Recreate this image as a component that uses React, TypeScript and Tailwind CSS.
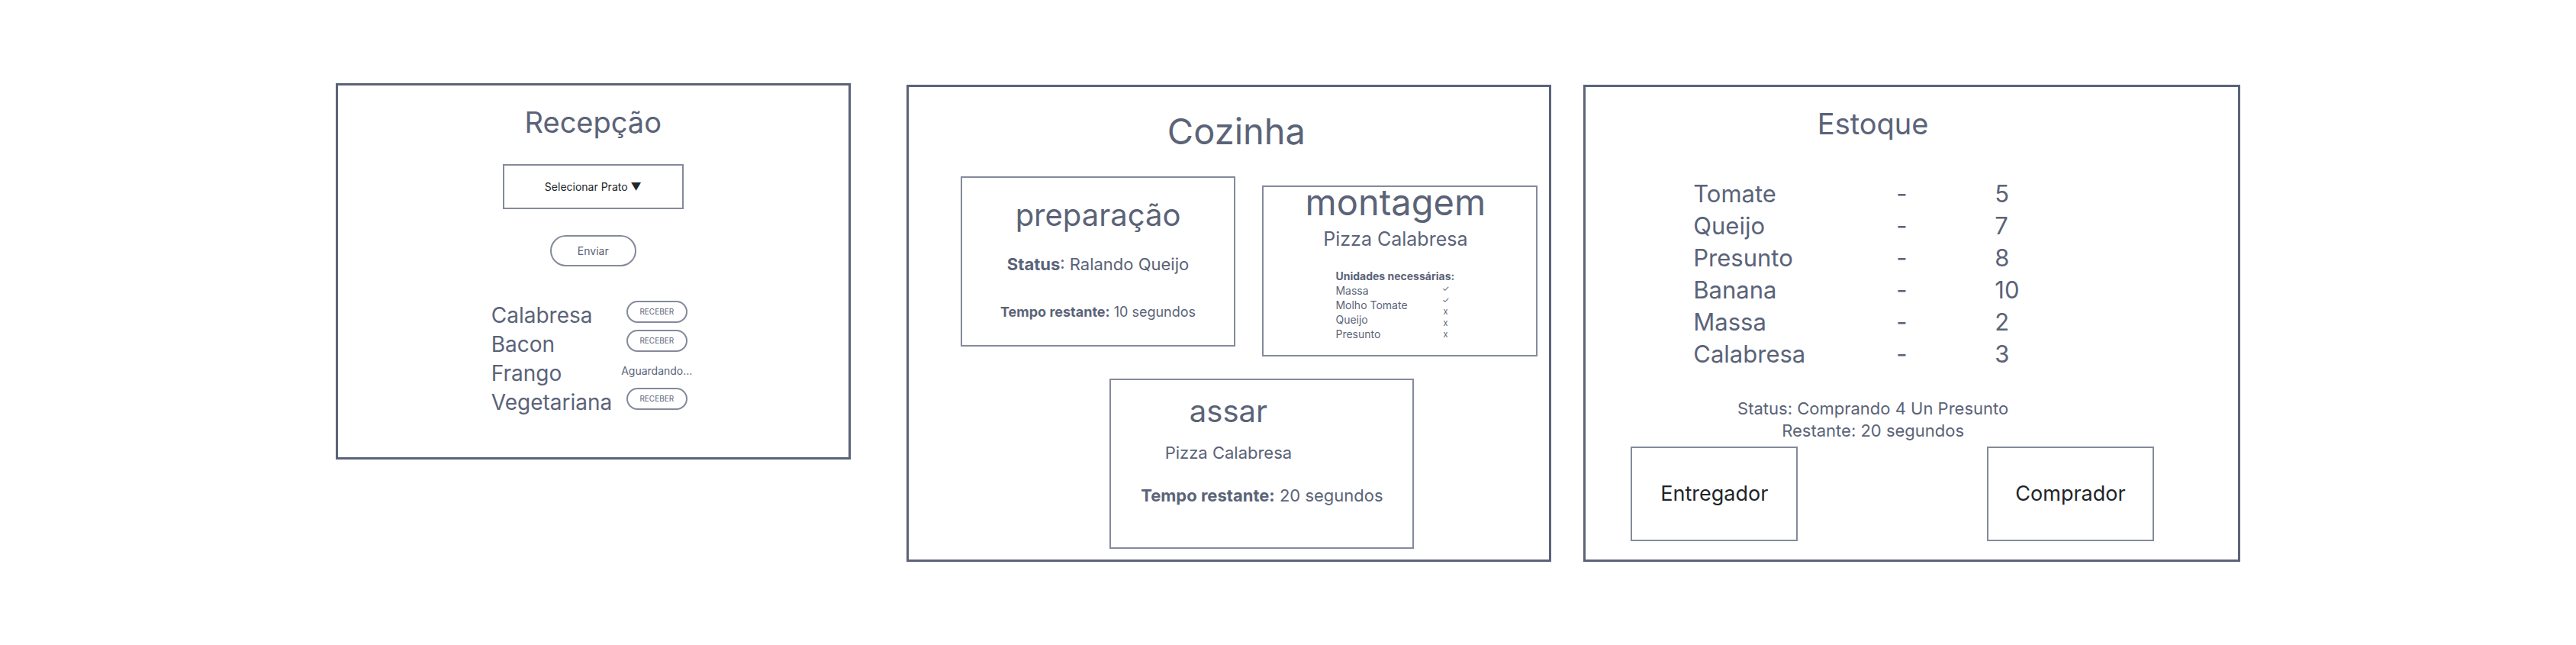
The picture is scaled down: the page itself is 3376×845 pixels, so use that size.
import type { ReactNode } from "react";

const orders = [
  { name: "Calabresa", ready: true },
  { name: "Bacon", ready: true },
  { name: "Frango", ready: false },
  { name: "Vegetariana", ready: true },
];

const units = ["Massa", "Molho Tomate", "Queijo", "Presunto"];
const marks = ["✓", "✓", "x", "x", "x"];

const stock = [
  { name: "Tomate", amount: 5 },
  { name: "Queijo", amount: 7 },
  { name: "Presunto", amount: 8 },
  { name: "Banana", amount: 10 },
  { name: "Massa", amount: 2 },
  { name: "Calabresa", amount: 3 },
];

function Panel({ className, children }: { className: string; children: ReactNode }) {
  return <section className={`border-[3px] border-[#5b6378] ${className}`}>{children}</section>;
}

function Reception() {
  return (
    <Panel className="mt-[109px] mr-[31px] flex flex-col items-center pt-6 pb-[53px]">
      <h2 className="text-[38px] leading-[48px]">Recepção</h2>
      <select
        aria-label="Selecionar Prato"
        className="mt-[31px] h-[59px] w-[237px] appearance-none border-2 border-[#848a9b] bg-white text-center text-[14px] text-[#212529] [text-align-last:center]"
      >
        <option>Selecionar Prato ▼</option>
      </select>
      <button className="mt-[34px] h-[41px] w-[113px] rounded-full border-2 border-[#848a9b] text-[14px]">
        Enviar
      </button>
      <ul className="mt-[45px] w-[267px] pr-[3px]">
        {orders.map((order) => (
          <li key={order.name} className="grid h-[38px] grid-cols-[1fr_94px] items-start">
            <span className="text-[28px] leading-[38px]">{order.name}</span>
            {order.ready ? (
              <button className="h-[29px] w-20 justify-self-center rounded-full border-2 border-[#848a9b] text-[10px]">
                RECEBER
              </button>
            ) : (
              <span className="justify-self-center text-[14px] leading-8">Aguardando...</span>
            )}
          </li>
        ))}
      </ul>
    </Panel>
  );
}

function Kitchen() {
  return (
    <Panel className="mt-[111px] pt-7 pb-[14px]">
      <h2 className="pl-5 text-center text-[47px] leading-[60px]">Cozinha</h2>
      <div className="mt-[29px] flex items-start gap-[35px] pr-[15px] pl-[68px]">
        <article className="flex-1 border-2 border-[#848a9b] pt-[25px] pb-[31px] text-center">
          <h3 className="text-[40px] leading-[48px]">preparação</h3>
          <p className="mt-[26px] text-[22px] leading-7">
            <strong className="font-bold">Status</strong>: Ralando Queijo
          </p>
          <p className="mt-[37px] text-[18px] leading-6">
            <strong className="font-bold">Tempo restante:</strong> 10 segundos
          </p>
        </article>
        <article className="mt-3 flex-1 border-2 border-[#848a9b] pb-[18px]">
          <h3 className="pr-3 text-center text-[47px] leading-10">montagem</h3>
          <p className="mt-3 pr-3 text-center text-[25px] leading-8">Pizza Calabresa</p>
          <div className="mt-[23px] ml-[94px] text-[14px] leading-[19px]">
            <strong className="block font-bold">Unidades necessárias:</strong>
            <div className="flex w-[149px] justify-between">
              <ul>
                {units.map((unit) => (
                  <li key={unit}>{unit}</li>
                ))}
              </ul>
              <ul className="text-center text-[11px] leading-[15px]">
                {marks.map((mark, i) => (
                  <li key={i}>{mark}</li>
                ))}
              </ul>
            </div>
          </div>
        </article>
      </div>
      <div className="mt-[29px] flex justify-center pl-[87px]">
        <article className="w-[399px] border-2 border-[#848a9b] pt-[17px] pb-[54px] text-center">
          <h3 className="pr-[88px] text-[40px] leading-[48px]">assar</h3>
          <p className="mt-4 pr-[88px] text-[22px] leading-7">Pizza Calabresa</p>
          <p className="mt-7 text-[22px] leading-7">
            <strong className="font-bold">Tempo restante:</strong> 20 segundos
          </p>
        </article>
      </div>
    </Panel>
  );
}

function Stock() {
  return (
    <Panel className="mt-[111px] pt-6 pb-6">
      <h2 className="pr-[102px] text-center text-[38px] leading-[48px]">Estoque</h2>
      <table className="mt-[47px] ml-[141px] table-fixed text-left text-[31px] leading-[42px]">
        <tbody>
          {stock.map((item) => (
            <tr key={item.name}>
              <th scope="row" className="w-[266px] p-0 font-normal">{item.name}</th>
              <td className="w-[129px] p-0">-</td>
              <td className="w-[60px] p-0">{item.amount}</td>
            </tr>
          ))}
        </tbody>
      </table>
      <p className="mt-9 pr-[102px] text-center text-[22px] leading-[29px]">
        Status: Comprando 4 Un Presunto
        <br />
        Restante: 20 segundos
      </p>
      <div className="mt-[6px] flex justify-between pr-[110px] pl-[59px] text-[27px] text-[#212529]">
        <button className="h-[124px] w-[219px] border-2 border-[#848a9b]">Entregador</button>
        <button className="h-[124px] w-[219px] border-2 border-[#848a9b]">Comprador</button>
      </div>
    </Panel>
  );
}

export default function App() {
  return (
    <main className="grid min-h-screen grid-cols-[705fr_845fr_860fr] items-start gap-[42px] bg-white px-[440px] font-['Inter',sans-serif] text-[#5b6378]">
      <Reception />
      <Kitchen />
      <Stock />
    </main>
  );
}
